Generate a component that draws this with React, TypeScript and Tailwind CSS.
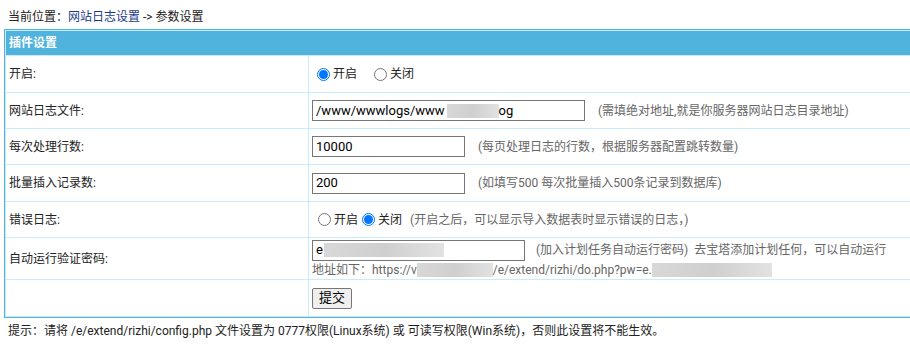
import React from "react";

const font = { fontFamily: 'Roboto, "Noto Sans CJK SC", sans-serif' };

function Blur({ w, className = "" }: { w: number; className?: string }) {
  return (
    <span
      className={"inline-block align-middle h-[14px] bg-gradient-to-r from-[#d8d8d8] via-[#cfcfcf] to-[#e2e2e2] " + className}
      style={{ width: w }}
    />
  );
}

function Radio({ checked }: { checked: boolean }) {
  return (
    <span className="inline-flex items-center justify-center w-[13px] h-[13px] rounded-full align-middle">
      {checked ? (
        <span className="w-[13px] h-[13px] rounded-full border border-[#0075ff] flex items-center justify-center">
          <span className="w-[9px] h-[9px] rounded-full bg-[#0075ff]" />
        </span>
      ) : (
        <span className="w-[13px] h-[13px] rounded-full border border-[#767676] bg-white" />
      )}
    </span>
  );
}

function Row({ label, h, children }: { label: string; h: string; children: React.ReactNode }) {
  return (
    <>
      <div className={"bg-white flex items-center pl-[3px] text-[#222] " + h}>{label}</div>
      <div className={"bg-white flex items-center pl-[3px] " + h}>{children}</div>
    </>
  );
}

export default function App() {
  return (
    <div className="w-[910px] h-[346px] overflow-hidden bg-white text-[12px] leading-[16px] text-[#222]" style={font}>
      <div className="h-[29px] pt-[9px] pl-[8px]">
        当前位置：<span className="text-[#1d3a87]">网站日志设置</span> -&gt; 参数设置
      </div>
      <div className="ml-[4px] w-[920px] border border-[#4fb3df] bg-[#c8ecfb] p-px grid grid-cols-[302px_1fr] gap-px">
        <div className="col-span-2 h-[24px] bg-[#4fb3dd] text-white font-bold flex items-center pl-[3px]">插件设置</div>
        <Row label="开启:" h="h-[36px]">
          <label className="flex items-center ml-[5px]">
            <Radio checked />
            <span className="ml-[3px]">开启</span>
          </label>
          <label className="flex items-center ml-[17px]">
            <Radio checked={false} />
            <span className="ml-[3px]">关闭</span>
          </label>
        </Row>
        <Row label="网站日志文件:" h="h-[35px]">
          <div className="w-[273px] h-[21px] border border-[#767676] flex items-center pl-[3px] text-[13px] text-black overflow-hidden whitespace-nowrap">
            /www/wwwlogs/www<Blur w={52} className="ml-[2px]" />og
          </div>
          <span className="ml-[13px] text-[#666]">(需填绝对地址,就是你服务器网站日志目录地址)</span>
        </Row>
        <Row label="每次处理行数:" h="h-[35px]">
          <div className="w-[153px] h-[21px] border border-[#767676] flex items-center pl-[3px] text-[13px] text-black">10000</div>
          <span className="ml-[13px] text-[#666]">(每页处理日志的行数，根据服务器配置跳转数量)</span>
        </Row>
        <Row label="批量插入记录数:" h="h-[36px]">
          <div className="w-[153px] h-[21px] border border-[#767676] flex items-center pl-[3px] text-[13px] text-black">200</div>
          <span className="ml-[13px] text-[#666]">(如填写500 每次批量插入500条记录到数据库)</span>
        </Row>
        <Row label="错误日志:" h="h-[35px]">
          <label className="flex items-center ml-[6px]">
            <Radio checked={false} />
            <span className="ml-[3px]">开启</span>
          </label>
          <label className="flex items-center ml-[4px]">
            <Radio checked />
            <span className="ml-[3px]">关闭</span>
          </label>
          <span className="ml-[8px] text-[#666]">(开启之后，可以显示导入数据表时显示错误的日志，)</span>
        </Row>
        <Row label="自动运行验证密码:" h="h-[41px]">
          <div className="flex flex-col">
            <div className="flex items-center">
              <div className="w-[213px] h-[21px] border border-[#767676] flex items-center pl-[3px] text-[13px] text-black overflow-hidden whitespace-nowrap">
                e<Blur w={120} className="ml-[1px]" />
              </div>
              <span className="ml-[11px] text-[#666] whitespace-nowrap">(加入计划任务自动运行密码)&nbsp;&nbsp;去宝塔添加计划任何，可以自动运行</span>
            </div>
            <div className="text-[#666] whitespace-nowrap mt-[1px]">
              地址如下：https://v<Blur w={76} />/e/extend/rizhi/do.php?pw=e.<Blur w={120} />
            </div>
          </div>
        </Row>
        <div className="bg-white h-[36px]" />
        <div className="bg-white h-[36px] flex items-center pl-[3px]">
          <button className="h-[21px] px-[6px] border border-[#767676] rounded-[2px] bg-[#efefef] text-[13px] text-black">提交</button>
        </div>
      </div>
      <div className="pl-[8px] pt-[5px]">
        提示：请将 /e/extend/rizhi/config.php 文件设置为 0777权限(Linux系统) 或 可读写权限(Win系统)，否则此设置将不能生效。
      </div>
    </div>
  );
}
